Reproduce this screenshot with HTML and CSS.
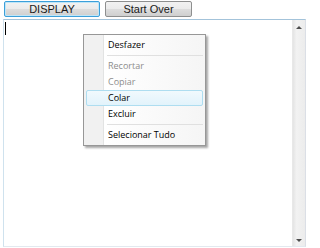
FILE: index.html
```html
<!DOCTYPE html>
<html lang="pt">
<head>
  <meta charset="UTF-8">
  <title>Display</title>
  <link rel="stylesheet" href="styles.css">
</head>
<body>
  <div class="toolbar">
    <button class="btn btn-active">DISPLAY</button>
    <button class="btn">Start Over</button>
  </div>
  <div class="editor">
    <div class="editor-text"><span class="caret"></span></div>
    <div class="scrollbar">
      <span class="arrow arrow-up"></span>
      <span class="arrow arrow-down"></span>
    </div>
    <ul class="menu">
      <li class="menu-item">Desfazer</li>
      <li class="menu-sep"></li>
      <li class="menu-item disabled">Recortar</li>
      <li class="menu-item disabled">Copiar</li>
      <li class="menu-item hover">Colar</li>
      <li class="menu-item">Excluir</li>
      <li class="menu-sep"></li>
      <li class="menu-item">Selecionar Tudo</li>
    </ul>
  </div>
</body>
</html>
```

FILE: styles.css
```css
body {
  margin: 0;
  padding: 1px 14px 3px 3px;
  background: #fff;
  font-family: "Liberation Sans", Arial, sans-serif;
}

.toolbar {
  display: flex;
  gap: 5px;
  padding-left: 1px;
  height: 17px;
}

.btn {
  height: 16px;
  padding: 0;
  border: 1px solid #8e8f8f;
  border-radius: 2px;
  background: linear-gradient(#f2f2f2, #ebebeb 50%, #dddddd 51%, #cfcfcf);
  font-family: "Liberation Sans", Arial, sans-serif;
  font-size: 11px;
  color: #1a1a1a;
  width: 87px;
}

.btn-active {
  width: 96px;
  border-color: #3c9fd9;
  box-shadow: inset 0 0 0 1px #bfe6f8;
}

.editor {
  position: relative;
  display: flex;
  height: 226px;
  margin-top: 1px;
  border: 1px solid #abadb3;
  border-top-color: #a3c3da;
  border-left-color: #cfe2ee;
  border-bottom-color: #e3e9ef;
  border-right-color: #dbdfe6;
}

.editor-text {
  flex: 1;
  padding: 2px 1px;
}

.caret {
  display: block;
  width: 1px;
  height: 13px;
  background: #000;
}

.scrollbar {
  width: 12px;
  background: linear-gradient(90deg, #e4e4e4, #f2f2f2 30%, #ececec);
  border-left: 1px solid #e8e8e8;
  display: flex;
  flex-direction: column;
  justify-content: space-between;
  align-items: center;
  padding: 6px 0 4px;
}

.arrow {
  width: 0;
  height: 0;
  border-left: 3px solid transparent;
  border-right: 3px solid transparent;
}

.arrow-up {
  border-bottom: 3px solid #4d4d4d;
}

.arrow-down {
  border-top: 3px solid #4d4d4d;
}

.menu {
  position: absolute;
  left: 79px;
  top: 14px;
  width: 117px;
  margin: 0;
  padding: 2px;
  list-style: none;
  background: linear-gradient(90deg, #f1f1f1 19px, #e2e3e3 19px, #e2e3e3 20px, #fff 20px, #f5f5f5);
  border: 1px solid #979797;
  box-shadow: 2px 2px 2px rgba(0, 0, 0, 0.35);
  font-family: "Open Sans", "Noto Sans", sans-serif;
  font-size: 9px;
  color: #000;
}

.menu-item {
  height: 14px;
  line-height: 14px;
  padding-left: 21px;
  border: 1px solid transparent;
  border-radius: 2px;
}

.menu-item.disabled {
  color: #8d8d8d;
}

.menu-item.hover {
  border-color: #aeddf0;
  background: linear-gradient(#f1f9fd, #e2f3fb);
}

.menu-sep {
  height: 1px;
  margin: 2px 0 2px 21px;
  background: #e0e0e0;
}
```
